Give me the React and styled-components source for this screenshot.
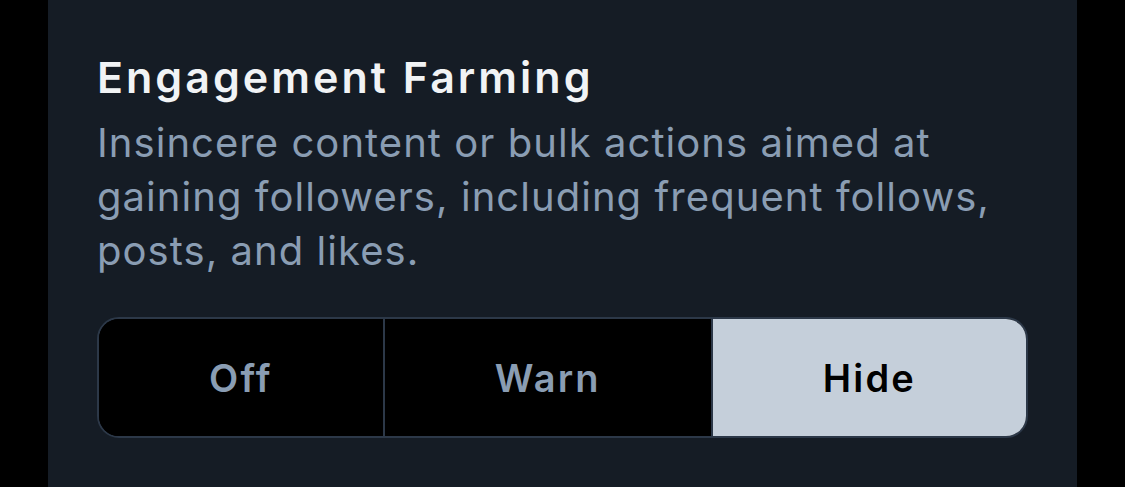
import React, { useState } from 'react';
import styled, { createGlobalStyle } from 'styled-components';

const GlobalStyle = createGlobalStyle`
  html, body {
    margin: 0;
    padding: 0;
    background: #000;
  }
  body {
    font-family: Inter, "Noto Sans", "Liberation Sans", sans-serif;
    -webkit-font-smoothing: antialiased;
  }
`;

const Page = styled.div`
  display: flex;
  min-height: 487px;
  padding-left: 48px;
`;

const Panel = styled.section`
  width: 1029px;
  min-height: 487px;
  box-sizing: border-box;
  background-color: #151c25;
  padding: 52px 49px 0;
  display: flex;
  flex-direction: column;
`;

const Title = styled.h2`
  margin: 0;
  font-size: 43px;
  line-height: 50px;
  font-weight: 600;
  color: #f1f3f5;
  letter-spacing: 3px;
`;

const Description = styled.p`
  margin: 14px 0 0;
  font-size: 40px;
  line-height: 54px;
  font-weight: 400;
  color: #8a9db3;
  letter-spacing: 1.05px;
`;

const Segmented = styled.div`
  display: flex;
  margin-top: 39px;
  width: 931px;
  height: 121px;
  box-sizing: border-box;
  border: 2px solid #2c3848;
  border-radius: 22px;
  overflow: hidden;
  background: #000;
`;

const Segment = styled.button`
  flex: 1 1 auto;
  border: none;
  border-left: ${(props) => (props.$first ? 'none' : '2px solid #2c3848')};
  background: ${(props) => (props.$active ? '#c5cfda' : '#000')};
  color: ${(props) => (props.$active ? '#000' : '#8a9db3')};
  font-family: inherit;
  font-size: 38px;
  font-weight: 600;
  letter-spacing: 2.2px;
  padding: 0;
  cursor: pointer;
`;

const options = ['Off', 'Warn', 'Hide'];

function App() {
  const [selected, setSelected] = useState('Hide');
  return (
    <>
      <GlobalStyle />
      <Page>
        <Panel>
          <Title>Engagement Farming</Title>
          <Description>
            Insincere content or bulk actions aimed at gaining followers, including frequent follows,
            posts, and likes.
          </Description>
          <Segmented>
            {options.map((option, i) => (
              <Segment
                key={option}
                $first={i === 0}
                $active={selected === option}
                onClick={() => setSelected(option)}
              >
                {option}
              </Segment>
            ))}
          </Segmented>
        </Panel>
      </Page>
    </>
  );
}

export default App;
